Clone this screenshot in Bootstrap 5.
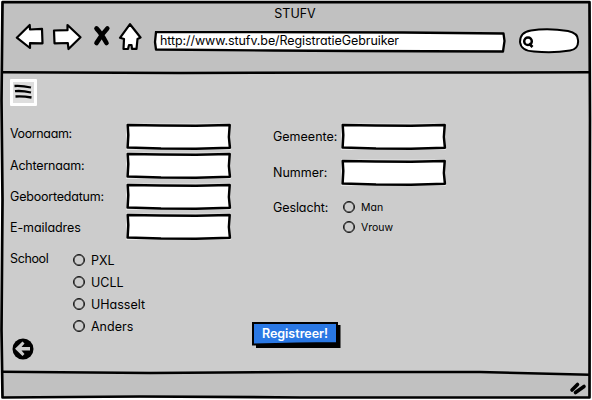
<!DOCTYPE html>
<html lang="nl">
<head>
<meta charset="utf-8">
<meta name="viewport" content="width=device-width, initial-scale=1">
<title>STUFV</title>
<link href="https://cdn.jsdelivr.net/npm/bootstrap@5.3.0/dist/css/bootstrap.min.css" rel="stylesheet">
<style>
body{font-family:Inter,"Open Sans",sans-serif;font-feature-settings:"cv11","calt" 0;font-size:12.5px;line-height:18px;color:#000;width:592px;height:400px;overflow:hidden;background:#fff}
.win{width:592px;height:400px}
.frame{position:absolute;inset:0;pointer-events:none}
.topbar{height:73px;padding:4px 0 0 3px}
.title{height:19px;line-height:19px;font-size:12.5px;padding-right:5px}
.tools{height:40px;padding:0 10px 0 12px}
.url{width:353px;height:24px;margin-left:10px}
.url span{position:relative;display:block;padding-left:7px;line-height:19px;letter-spacing:-.08px}
.find{width:62px;height:27px;margin-left:12px}
.sk{position:absolute;left:0;top:0}
.menu-btn{width:27px;height:27px;margin:6px 0 0 10px;border:3px solid #fff;background:#dedede;padding:0;border-radius:1px}
.cols{padding:17px 0 0 10px;height:213px}
.left-col{width:263px}
.fld{width:106px;height:28px}
.fld input{position:relative;width:98px;height:20px;margin:4px;border:0;padding:0 4px;background:transparent;outline:0;display:block}
.lab{line-height:18px}
.left-col .lab{width:116px;letter-spacing:-.2px}
.left-col .lab.tight{letter-spacing:-.38px}
.left-col .lab.loose{letter-spacing:-.08px}
.right-col .lab{width:68px}
.h29{height:29px}.h30{height:30px}.h31{height:31px}.h36{height:36px}
.drop-1{padding-top:2px}.drop-2{padding-top:5px}.drop-3{padding-top:6px}
.sch{padding-top:6px}
.opt{height:22px;gap:6px}
.opt.sm-o{height:20px;font-size:10.5px}
.opt input{appearance:none;width:12px;height:12px;border:1px solid #111;border-radius:50%;margin:0;background:transparent;box-shadow:inset 0 0 0 .5px #111}
.opt input:checked{box-shadow:inset 0 0 0 2px #ccc;background:#111}
.opt span{padding-top:1px}
.school .opts{padding-top:1px}
.school .lab{width:63px;padding-top:2px}
.sex .lab{padding-top:4px;letter-spacing:-.1px}
.sex .opts{padding:2px 0 0 2px}
.acts{padding:0 0 0 12px;height:56px}
.back{width:22px;height:22px;margin-top:19px}
.reg{margin-left:218px;margin-top:3px;width:89px;height:27px}
.reg span{position:relative;color:#fff;font-weight:600;font-size:12.5px;line-height:20px;display:block;width:86px;height:24px;text-align:center}
button{color:inherit}
</style>
<script src="https://cdn.jsdelivr.net/npm/bootstrap@5.3.0/dist/js/bootstrap.bundle.min.js"></script>
</head>
<body>
<svg width="0" height="0" class="position-absolute">
  <symbol id="box" viewBox="0 0 106 28">
    <path d="M0 .5H105V27H0Z" fill="#e6e6e6"/>
    <path d="M1.700 2L35 2.400 70 2.700 103.700 2.100 102.900 14 103.900 24.700 70 25.800 35 25.600 1.600 24.500 2.300 12Z" fill="#fff" stroke="#000" stroke-width="2.500" stroke-linejoin="round"/>
  </symbol>
</svg>
<div class="win position-relative d-flex flex-column">
  <svg class="frame" width="592" height="400">
    <path d="M2 2.500H590V398H2Z" fill="#ccc"/>
    <path d="M2 2.500H590V72.500H2Z M2 371.500L300 372 480 371.500 590 375V398H2Z" fill="#c1c1c1"/>
    <path d="M2.500 2.200H589.500L590 120 589.500 397.500 300 397.500 140 396.500 2.500 397.500 1.500 330 2.500 200 1.500 100Z" fill="none" stroke="#000" stroke-width="2.700" stroke-linejoin="round"/>
    <path d="M2 72.300L180 73 400 72.600 590 72.300M2 371.800L150 373 300 372 480 372 590 374.700" fill="none" stroke="#000" stroke-width="2.500"/>
  </svg>
  <header class="topbar position-relative">
    <div class="title text-center">STUFV</div>
    <nav class="tools d-flex">
      <svg width="128" height="32" viewBox="15 23 128 32" aria-label="Navigatie">
        <g fill="#fff" stroke="#000" stroke-width="2.200" stroke-linejoin="round">
          <path d="M16.800 37.700L29.700 25 30 29.500 42 28.900 42.500 43.300 30 43.200V48Z"/>
          <path d="M54 30.500L67.500 30.200 67.500 25 80.500 37.300 68.500 49 67.800 43 54.500 43.300Z"/>
          <path d="M130 24.200L140.500 37.500 137.500 39 136.500 48.800H132L131.500 45H129L128 49H123.500L124 39 120 37.800Z"/>
        </g>
        <path d="M96.500 28.500Q101 33 106.500 43M107.300 28.500Q102 34 96.500 43" fill="none" stroke="#000" stroke-width="4.600" stroke-linecap="round"/>
      </svg>
      <div class="url position-relative mt-2">
        <svg class="sk" width="353" height="24"><path d="M3 1L100 1 250 1.500 350.500 2.500 351.500 10 350 20.500 200 20 120 19.500 3 18.500 2 11Z" fill="#fff" stroke="#000" stroke-width="2.300" stroke-linejoin="round"/></svg>
        <span>http://www.stufv.be/RegistratieGebruiker</span>
      </div>
      <div class="find position-relative">
        <svg class="sk" width="62" height="32"><path d="M2 19Q2 9 13 7.500 30 5 50 8 60 10 60 17 61 26 52 27.500 35 30.500 16 28.500 3 28 2 19Z" fill="#fff" stroke="#000" stroke-width="2"/><circle cx="10" cy="18.300" r="3.800" fill="none" stroke="#000" stroke-width="2.500"/><path d="M11 20.500L14.500 24" stroke="#000" stroke-width="2.700"/></svg>
      </div>
    </nav>
  </header>
  <main class="position-relative">
    <button class="menu-btn d-block" aria-label="Menu"><svg class="d-block" width="21" height="21"><path d="M1.500 4Q9 3.500 18 5.500M2 9.200Q9 8.500 18 10.500M2.500 14.500Q10 14 18.500 15.500" fill="none" stroke="#000" stroke-width="2.300"/></svg></button>
    <form class="cols d-flex">
      <div class="left-col">
        <div class="d-flex h29"><label class="lab tight drop-1" for="a">Voornaam:</label><div class="fld position-relative"><svg class="sk" width="106" height="28"><use href="#box"/></svg><input id="a"></div></div>
        <div class="d-flex h31"><label class="lab drop-2" for="b">Achternaam:</label><div class="fld position-relative"><svg class="sk" width="106" height="28"><use href="#box"/></svg><input id="b"></div></div>
        <div class="d-flex h30"><label class="lab drop-2" for="c">Geboortedatum:</label><div class="fld position-relative"><svg class="sk" width="106" height="28"><use href="#box"/></svg><input id="c"></div></div>
        <div class="d-flex h29"><label class="lab loose drop-3" for="d">E-mailadres</label><div class="fld position-relative"><svg class="sk" width="106" height="28"><use href="#box"/></svg><input id="d"></div></div>
        <div class="d-flex school sch"><span class="lab tight">School</span>
          <div class="opts">
            <label class="opt d-flex align-items-center"><input type="radio" name="s"><span>PXL</span></label>
            <label class="opt d-flex align-items-center"><input type="radio" name="s"><span>UCLL</span></label>
            <label class="opt d-flex align-items-center"><input type="radio" name="s"><span>UHasselt</span></label>
            <label class="opt d-flex align-items-center"><input type="radio" name="s"><span>Anders</span></label>
          </div>
        </div>
      </div>
      <div class="right-col">
        <div class="d-flex h36"><label class="lab drop-2" for="e">Gemeente:</label><div class="fld position-relative"><svg class="sk" width="106" height="28"><use href="#box"/></svg><input id="e"></div></div>
        <div class="d-flex h36"><label class="lab drop-2" for="f">Nummer:</label><div class="fld position-relative"><svg class="sk" width="106" height="28"><use href="#box"/></svg><input id="f"></div></div>
        <div class="d-flex sex"><span class="lab">Geslacht:</span>
          <div class="opts">
            <label class="opt sm-o d-flex align-items-center"><input type="radio" name="g"><span>Man</span></label>
            <label class="opt sm-o d-flex align-items-center"><input type="radio" name="g"><span>Vrouw</span></label>
          </div>
        </div>
      </div>
    </form>
    <div class="acts d-flex">
      <button class="back p-0 border-0 bg-transparent" aria-label="Terug"><svg class="d-block" width="22" height="22"><circle cx="11" cy="11" r="10.500"/><path d="M3 10.800L10.500 3.500 12.500 5.500 9.500 9H18V12.500H9.500L12.500 16 10.500 18Z" fill="#ccc"/></svg></button>
      <button class="reg position-relative p-0 border-0 bg-transparent"><svg class="sk" width="89" height="27"><path d="M4 3H88.500V26H4Z"/><path d="M1 1L85 1V21L45 21.500 1 22.500Z" fill="#2a78e4" stroke="#000" stroke-width="2"/></svg><span>Registreer!</span></button>
    </div>
  </main>
  <svg class="position-absolute bottom-0 end-0" width="24" height="24"><path d="M4 14L9.500 8.500M7.500 16.500L16 10.500" fill="none" stroke="#000" stroke-width="3.600" stroke-linecap="round"/></svg>
</div>
</body>
</html>
